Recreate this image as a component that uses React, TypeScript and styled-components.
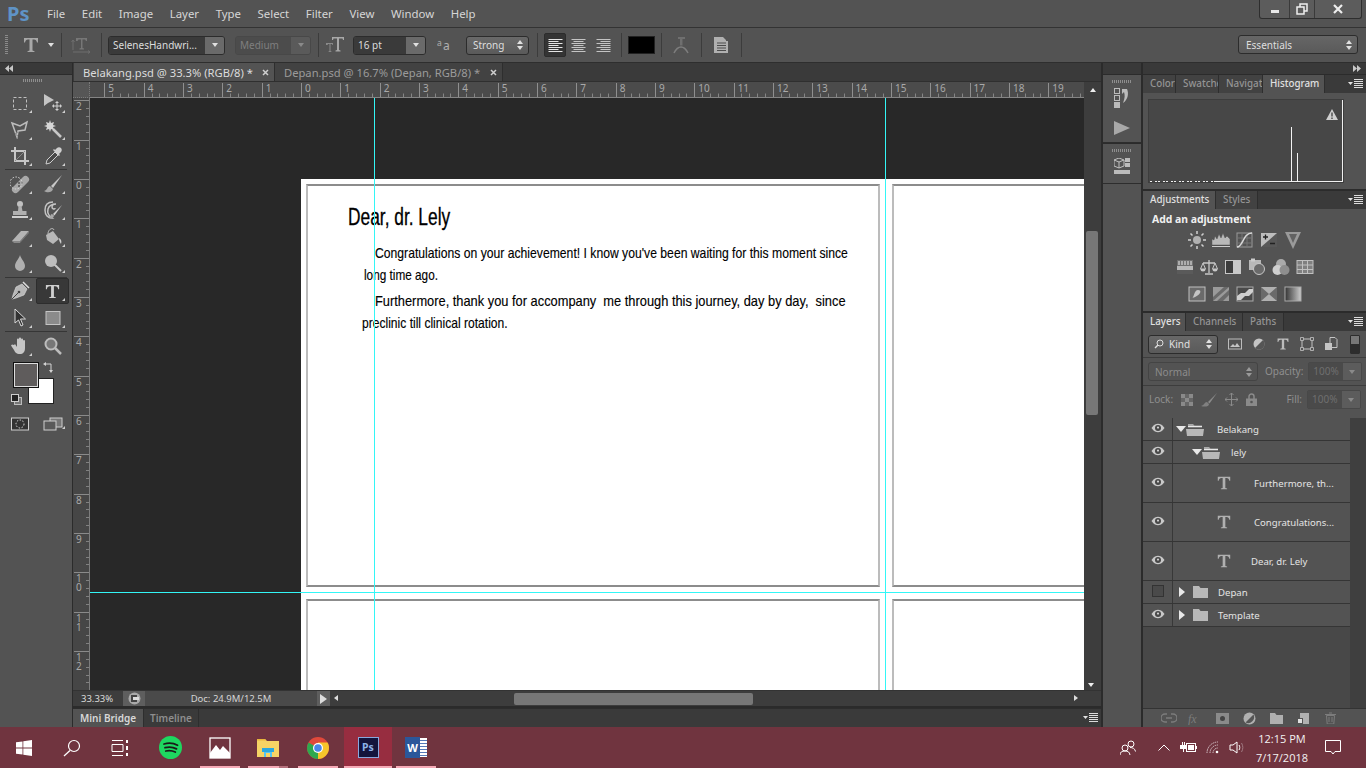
import React from 'react';
import styled, { createGlobalStyle } from 'styled-components';

const Global = createGlobalStyle`
  html, body { margin: 0; padding: 0; background: #2f2f2f; overflow: hidden; }
  * { box-sizing: border-box; }
  #root { width: 1366px; height: 768px; }
`;

const UI = `"Noto Sans", "DejaVu Sans", sans-serif`;

const Root = styled.div`
  width: 1366px; height: 768px; display: flex; flex-direction: column; overflow: hidden;
  background: #2b2b2b; font-family: ${UI}; font-size: 11px; color: #d8d8d8;
`;

/* ---------- Menu bar ---------- */
const MenuBar = styled.div`
  height: 28px; flex: none; display: flex; align-items: center; background: #535353; position: relative;
  border-bottom: 1px solid #333;
`;
const Logo = styled.div`
  width: 47px; padding-left: 7px; font-size: 20px; font-weight: 700; color: #5f93c6; line-height: 28px;
`;
const MenuItems = styled.div`display: flex; gap: 16.6px; font-size: 11.4px; color: #d6d6d6;`;
const WinControls = styled.div`
  position: absolute; right: 4px; top: 0; height: 19px; display: flex; border: 1px solid #2e2e2e; border-top: 0;
  border-radius: 0 0 3px 3px; background: #5c5c5c;
`;
const WinBtn = styled.div<{ $w: number }>`
  width: ${p => p.$w}px; display: flex; align-items: center; justify-content: center; border-right: 1px solid #3a3a3a;
  &:last-child { border-right: 0; }
`;

/* ---------- Options bar ---------- */
const OptionsBar = styled.div`
  height: 35px; flex: none; display: flex; align-items: center; background: #535353; border-bottom: 1px solid #2e2e2e; position: relative;
`;
const Grip = styled.div`width: 3px; height: 20px; margin-left: 5px; background: repeating-linear-gradient(#8a8a8a 0 1px, transparent 1px 2px);`;
const OptSep = styled.div<{ $l: number }>`width: 1px; height: 24px; background: #3c3c3c; margin-left: ${p => p.$l}px; flex: none;`;
const OptCell = styled.div<{ $l: number; $w: number }>`
  margin-left: ${p => p.$l}px; width: ${p => p.$w}px; height: 24px; display: flex; align-items: center; justify-content: center; flex: none;
`;
const Field = styled.div<{ $l: number; $w: number; $dim?: boolean }>`
  margin-left: ${p => p.$l}px; width: ${p => p.$w}px; height: 19px; flex: none; display: flex; border-radius: 3px; overflow: hidden;
  border: 1px solid ${p => (p.$dim ? '#484848' : '#2c2c2c')};
`;
const FieldText = styled.div<{ $dim?: boolean }>`
  flex: 1; min-width: 0; background: ${p => (p.$dim ? '#4c4c4c' : '#3a3a3a')}; color: ${p => (p.$dim ? '#7f7f7f' : '#dcdcdc')};
  font-size: 10px; line-height: 17px; padding-left: 4px; white-space: nowrap;
`;
const FieldBtn = styled.div<{ $dim?: boolean }>`
  width: 19px; flex: none; background: ${p => (p.$dim ? '#5a5a5a' : '#6a6a6a')}; display: flex; align-items: center; justify-content: center;
`;
const Caret = styled.div<{ $c?: string }>`
  width: 0; height: 0; border-left: 3.5px solid transparent; border-right: 3.5px solid transparent; border-top: 4px solid ${p => p.$c || '#e0e0e0'};
`;
const Stepper = styled.div<{ $c?: string }>`
  display: flex; flex-direction: column; gap: 2px;
  &::before, &::after { content: ''; width: 0; height: 0; border-left: 3px solid transparent; border-right: 3px solid transparent; }
  &::before { border-bottom: 4px solid ${p => p.$c || '#e0e0e0'}; }
  &::after { border-top: 4px solid ${p => p.$c || '#e0e0e0'}; }
`;
const SelectBox = styled.div<{ $l?: number; $w: number; $dim?: boolean; $pad?: number }>`
  margin-left: ${p => p.$l || 0}px; width: ${p => p.$w}px; height: 19px; flex: none; border-radius: 3px;
  border: 1px solid ${p => (p.$dim ? '#444' : '#2c2c2c')}; background: ${p => (p.$dim ? '#535353' : 'linear-gradient(#696969,#5a5a5a)')};
  color: ${p => (p.$dim ? '#8c8c8c' : '#dedede')}; display: flex; align-items: center; justify-content: space-between;
  padding: 0 5px 0 ${p => p.$pad ?? 6}px; font-size: 10px;
`;
const AlignBtn = styled.div<{ $l: number; $on?: boolean }>`
  margin-left: ${p => p.$l}px; width: 22px; height: 24px; flex: none; display: flex; align-items: center; justify-content: center; border-radius: 2px;
  background: ${p => (p.$on ? '#343434' : 'transparent')}; border: 1px solid ${p => (p.$on ? '#2c2c2c' : 'transparent')};
`;
const Swatch = styled.div`margin-left: 6px; width: 27px; height: 18px; background: #000; border: 1px solid #222; flex: none;`;
const Essentials = styled(SelectBox)`position: absolute; left: 1238px; top: 7px; background: linear-gradient(#666,#5a5a5a);`;

/* ---------- Workspace ---------- */
const Workspace = styled.div`flex: 1; display: flex; min-height: 0; background: #2b2b2b;`;
const CollapseStrip = styled.div`
  height: 11px; background: #393939; display: flex; align-items: center; padding: 0 5px; justify-content: space-between; flex: none;
`;
const LeftColumn = styled.div`width: 72px; flex: none; display: flex; flex-direction: column; margin-right: 1px;`;
const ToolPanel = styled.div`flex: 1; background: #535353; margin-top: 1px; padding: 4px 0 0 3px; display: flex; flex-direction: column; align-items: flex-start;`;
const PanelGrip = styled.div<{ $w?: number }>`
  width: ${p => p.$w || 20}px; height: 3px; margin: 0 auto; flex: none; background: repeating-linear-gradient(90deg,#8e8e8e 0 1px,transparent 1px 2px);
`;
const ToolGrip = styled(PanelGrip)`margin: 0 0 8px 20px;`;
const ToolGrid = styled.div`display: grid; grid-template-columns: 33px 33px; grid-auto-rows: 26.3px;`;
const ToolBtn = styled.div<{ $on?: boolean; $noCorner?: boolean }>`
  position: relative; display: flex; align-items: center; justify-content: center; border-radius: 2px;
  background: ${p => (p.$on ? '#383838' : 'transparent')}; border: 1px solid ${p => (p.$on ? '#2d2d2d' : 'transparent')};
  &::after {
    content: ''; position: absolute; right: 3px; bottom: 2px; width: 0; height: 0; display: ${p => (p.$noCorner ? 'none' : 'block')};
    border-left: 3px solid transparent; border-bottom: 3px solid #cfcfcf;
  }
`;
const ToolSep = styled.div`width: 62px; height: 1px; background: #363636; margin: 0.5px 0 0.5px 2px;`;
const ColorWell = styled.div`position: relative; width: 66px; height: 50px; flex: none;`;
const BgSwatch = styled.div`position: absolute; left: 25px; top: 19px; width: 26px; height: 26px; background: #fff; border: 1px solid #222;`;
const FgSwatch = styled.div`position: absolute; left: 10px; top: 3px; width: 26px; height: 26px; background: #5f5c5c; border: 1px solid #111; outline: 1px solid #ddd; outline-offset: -2px;`;
const SwapIcon = styled.div`position: absolute; left: 40px; top: 2px;`;
const DefaultIcon = styled.div`position: absolute; left: 8px; top: 34px;`;
const ModeRow = styled.div`display: flex; margin-top: 7px; width: 66px;`;
const ModeBtn = styled(ToolBtn)`width: 33px; height: 16px;`;

const DocColumn = styled.div`width: 1028px; flex: none; display: flex; flex-direction: column; margin-right: 2px;`;
const TabBar = styled.div`height: 19px; flex: none; background: #3a3a3a; display: flex; padding-left: 1px; border-bottom: 1px solid #2f2f2f;`;
const DocTab = styled.div<{ $on?: boolean; $w: number }>`
  width: ${p => p.$w}px; display: flex; align-items: center; justify-content: space-between; padding: 0 5px 0 9px; font-size: 11.2px;
  background: ${p => (p.$on ? '#535353' : '#424242')}; color: ${p => (p.$on ? '#dcdcdc' : '#9b9b9b')}; white-space: nowrap;
  border-right: 1px solid #2e2e2e;
`;
const RulerTop = styled.div`height: 16px; flex: none; display: flex; background: #4b4b4b;`;
const RulerCorner = styled.div`
  width: 17px; background: #565656; border-right: 1px dotted #7a7a7a; border-bottom: 1px dotted #7a7a7a;
`;
const ScrollEnd = styled.div`width: 17px; flex: none; background: #3d3d3d; display: flex; align-items: center; justify-content: center;`;
const MainRow = styled.div`flex: 1; display: flex; min-height: 0;`;
const RulerLeft = styled.div`width: 17px; flex: none; background: #464646;`;
const Canvas = styled.div`flex: 1; position: relative; overflow: hidden; background: #282828;`;
const VScroll = styled.div`width: 17px; flex: none; background: #3d3d3d; display: flex; flex-direction: column; align-items: center; position: relative;`;
const VThumb = styled.div`position: absolute; left: 2px; top: 133px; width: 12px; height: 184px; background: #777; border-radius: 2px;`;
const DownMark = styled.div`position: absolute; bottom: 3px; left: 4px;`;
const Page = styled.div`
  position: absolute; left: 211px; top: 81px; width: 1200px; height: 840px; background: #fff; padding: 5px;
  display: grid; grid-template-columns: 574px 574px; grid-template-rows: 403px 403px; gap: 12px;
`;
const Card = styled.div`
  border: 2px solid #bcbcbc; border-top-color: #8c8c8c; border-bottom-color: #8c8c8c; padding: 19px 0 0 40px; color: #000;
  font-family: "Liberation Sans", sans-serif;
`;
const Title = styled.div`
  font-size: 23px; line-height: 24px; white-space: nowrap; height: 37px; -webkit-text-stroke: 0.3px #000;
  transform: scaleX(0.754); transform-origin: left center;
`;
const Letter = styled.div<{ $ind: number; $sx: number; $h?: number }>`
  font-size: 15px; height: ${p => p.$h || 22}px; line-height: 22px; white-space: pre; margin-left: ${p => p.$ind}px;
  transform: scaleX(${p => p.$sx}); transform-origin: left center; -webkit-text-stroke: 0.15px #000;
`;
const GuideV = styled.div<{ $x: number }>`position: absolute; top: 0; bottom: 0; left: ${p => p.$x}px; width: 1px; background: #33f6f6;`;
const GuideH = styled.div<{ $y: number }>`position: absolute; left: 0; right: 0; top: ${p => p.$y}px; height: 1px; background: #33f6f6;`;

const StatusRow = styled.div`height: 16px; flex: none; display: flex; align-items: center; background: #3d3d3d; border-top: 1px solid #333;`;
const Zoom = styled.div`width: 50px; padding-left: 8px; font-size: 9.5px; color: #dcdcdc;`;
const StatusIcon = styled.div`width: 22px; height: 15px; background: #5e5e5e; display: flex; align-items: center; justify-content: center;`;
const DocInfo = styled.div`width: 172px; height: 15px; background: #4a4a4a; font-size: 9.5px; color: #d4d4d4; text-align: center; line-height: 15px;`;
const PlayBtn = styled.div`width: 13px; height: 15px; background: #5e5e5e; display: flex; align-items: center; justify-content: center;`;
const HScroll = styled.div`flex: 1; height: 15px; position: relative; background: #3d3d3d;`;
const HThumb = styled.div`position: absolute; left: 184px; top: 2px; width: 239px; height: 12px; background: #777; border-radius: 2px;`;
const Arrow = styled.div<{ $dir: 'l' | 'r' | 'u' | 'd'; $c?: string }>`
  width: 0; height: 0; border: 3px solid transparent;
  ${p => p.$dir === 'l' && `border-right: 4px solid ${p.$c || '#ddd'}; border-left: 0;`}
  ${p => p.$dir === 'r' && `border-left: 4px solid ${p.$c || '#ddd'}; border-right: 0;`}
  ${p => p.$dir === 'u' && `border-bottom: 4px solid ${p.$c || '#eee'}; border-top: 0;`}
  ${p => p.$dir === 'd' && `border-top: 4px solid ${p.$c || '#eee'}; border-bottom: 0;`}
`;
const PlayArrow = styled(Arrow)`border-width: 5px 0 5px 7px;`;
const HArrowL = styled.div`position: absolute; left: 4px; top: 4px;`;
const HArrowR = styled.div`position: absolute; right: 6px; top: 4px;`;
const StatusEnd = styled(ScrollEnd)`height: 15px;`;
const BridgeRow = styled.div`
  height: 19px; flex: none; margin-top: 2px; display: flex; background: #3a3a3a; position: relative; border-top: 1px solid #2d2d2d;
`;
const BottomTab = styled.div<{ $on?: boolean; $w: number }>`
  width: ${p => p.$w}px; font-size: 10px; font-weight: 600; text-align: center; line-height: 18px;
  background: ${p => (p.$on ? '#535353' : 'transparent')}; color: ${p => (p.$on ? '#d8d8d8' : '#8e8e8e')}; border-right: 1px solid #2e2e2e;
`;
const MenuIconSpot = styled.div`position: absolute; right: 3px; top: 4px;`;

/* ---------- Dock ---------- */
const Dock = styled.div`width: 38px; flex: none; display: flex; flex-direction: column; margin-right: 2px;`;
const DockStrip = styled.div`height: 11px; background: #393939; flex: none;`;
const DockGroup = styled.div<{ $h: number }>`
  height: ${p => p.$h}px; flex: none; background: #535353; margin-top: 1px; border-bottom: 1px solid #2d2d2d; padding-top: 5px;
  display: flex; flex-direction: column; align-items: center; gap: 5px;
`;
const DockRest = styled.div`flex: 1; background: #535353; margin-top: 0;`;
const PlayIcon = styled.svg`display: block; margin-top: 8px;`;
const PluginIcon = styled.svg`display: block; margin-top: 1px;`;

/* ---------- Panels ---------- */
const PanelsCol = styled.div`width: 223px; flex: none; display: flex; flex-direction: column; gap: 2px;`;
const PanelsStrip = styled(CollapseStrip)`justify-content: flex-end; margin-bottom: -1px;`;
const Panel = styled.div<{ $h?: number; $grow?: boolean }>`
  background: #535353; display: flex; flex-direction: column; ${p => (p.$h ? `height:${p.$h}px;` : '')} flex: ${p => (p.$grow ? 1 : 'none')}; min-height: 0;
`;
const TabRow = styled.div`height: 18px; flex: none; background: #3a3a3a; display: flex; position: relative;`;
const PanelTab = styled.div<{ $on?: boolean; $w: number }>`
  width: ${p => p.$w}px; overflow: hidden; white-space: nowrap; font-size: 9.8px; font-weight: 500; line-height: 18px; padding-left: 7px;
  background: ${p => (p.$on ? '#535353' : '#424242')}; color: ${p => (p.$on ? '#e0e0e0' : '#949494')}; border-right: 1px solid #2e2e2e;
`;
const Histogram = styled.div`
  margin: 6px 0 0 5px; width: 196px; height: 84px; background: #474747; border: 1px solid #3d3d3d; position: relative;
`;
const HistIcon = styled.div`position: absolute; inset: 0;`;
const AddTitle = styled.div`font-size: 10.4px; font-weight: 700; color: #f0f0f0; margin: 2px 0 0 9px; line-height: 16px;`;
const AdjRow = styled.div<{ $l: number }>`display: flex; gap: 6px; margin: 2px 0 0 ${p => p.$l}px; height: 22px; align-items: center;`;
const AdjRow2 = styled(AdjRow)`margin-top: 5px;`;
const FilterRow = styled.div`height: 27px; flex: none; display: flex; align-items: center; padding-left: 5px; border-bottom: 1px solid #3d3d3d; position: relative;`;
const KindSelect = styled.div`
  width: 70px; height: 19px; border: 1px solid #2c2c2c; border-radius: 3px; background: linear-gradient(#676767,#5a5a5a);
  display: flex; align-items: center; gap: 5px; padding: 0 5px; font-size: 10px; color: #e0e0e0;
`;
const Spacer = styled.div`flex: 1;`;
const FilterIcons = styled.div`display: flex; gap: 10px; margin-left: 10px; align-items: center;`;
const MiniSwitch = styled.div`width: 10px; height: 19px; margin-left: 12px; background: linear-gradient(#777 50%, #2d2d2d 50%); border: 1px solid #2d2d2d; border-radius: 1px;`;
const BlendRow = styled.div`height: 28px; flex: none; display: flex; align-items: center; padding-left: 5px; border-bottom: 1px solid #3d3d3d;`;
const LockRow = styled(BlendRow)`border-bottom: 0; height: 32px; padding-bottom: 5px;`;
const DimLabel = styled.div<{ $l?: number }>`font-size: 10px; color: #8f8f8f; margin-left: ${p => p.$l || 0}px; margin-top: -2px;`;
const PctField = styled.div<{ $r?: number }>`
  width: 54px; height: 19px; margin-left: 5px; margin-right: ${p => p.$r || 0}px; display: flex; border-radius: 2px; overflow: hidden; border: 1px solid #484848; flex: none;
  font-size: 10px; color: #6f6f6f;
`;
const PctText = styled.div`flex: 1; background: #4a4a4a; line-height: 17px; padding-left: 4px;`;
const PctBtn = styled.div`width: 18px; background: #5c5c5c; display: flex; align-items: center; justify-content: center;`;
const LockIcons = styled.div`display: flex; gap: 8px; margin-left: 8px; align-items: center;`;
const LayersWrap = styled.div`flex: 1; display: flex; min-height: 0;`;
const LayerList = styled.div`width: 207px; flex: none; display: flex; flex-direction: column;`;
const LayerTrack = styled.div`flex: 1; background: #3f3f3f;`;
const LayerRow = styled.div<{ $h: number }>`
  height: ${p => p.$h}px; flex: none; display: flex; align-items: stretch; background: #535353; border-bottom: 1px solid #353535;
`;
const EyeCell = styled.div`width: 30px; flex: none; display: flex; align-items: center; justify-content: center; border-right: 1px solid #383838; padding-bottom: 2px;`;
const LayerBody = styled.div<{ $l: number }>`flex: 1; display: flex; align-items: center; padding-left: ${p => p.$l}px;`;
const LayerName = styled.div<{ $l: number }>`margin-left: ${p => p.$l}px; font-size: 9.6px; color: #e4e4e4; white-space: nowrap;`;
const EmptyBox = styled.div`width: 12px; height: 12px; border: 1px solid #333; background: #4a4a4a;`;
const TwistyGap = styled.span`width: 8px; flex: none;`;
const Twisty = styled.div<{ $open?: boolean }>`
  width: 0; height: 0; flex: none; border-style: solid;
  ${p => (p.$open
    ? 'border-width: 6px 5px 0 5px; border-color: #e8e8e8 transparent transparent transparent;'
    : 'border-width: 5px 0 5px 6px; border-color: transparent transparent transparent #e8e8e8;')}
`;
const PanelEmpty = styled.div`flex: 1; background: #484848; min-height: 0;`;
const PanelFooter = styled.div`
  height: 19px; flex: none; background: #535353; border-top: 1px solid #333; display: flex; align-items: center; padding-left: 12px;
`;
const FooterCell = styled.div`width: 27px; flex: none; display: flex; align-items: center; justify-content: center;`;

/* ---------- Taskbar ---------- */
const Taskbar = styled.div`height: 41px; flex: none; background: #70343f; display: flex; align-items: center; position: relative; color: #fff;`;
const TaskBtn = styled.div<{ $w: number; $on?: boolean; $inset?: number; $split?: boolean }>`
  width: ${p => p.$w}px; height: 41px; flex: none; display: flex; align-items: center; justify-content: center; position: relative;
  background: ${p => (p.$on ? '#972d40' : 'transparent')};
  &::after {
    content: ''; display: ${p => (p.$inset !== undefined ? 'block' : 'none')}; position: absolute; bottom: 0; left: ${p => p.$inset}px; right: ${p => p.$inset}px; height: 2px;
    background: ${p => (p.$split ? 'linear-gradient(90deg,#f5a9b6 78%,#b5717d 78%)' : '#f5a9b6')};
  }
`;
const PsTile = styled.div`
  width: 21px; height: 21px; background: #14143c; border: 1px solid #88a8de; color: #8fb2ea; font-size: 10.5px; font-weight: 700; line-height: 19px; text-align: center;
`;
const WordTile = styled.div`position: relative; width: 22px; height: 21px; display: flex; align-items: center;`;
const WordDoc = styled.div`
  position: absolute; right: 0; top: 1px; width: 16px; height: 19px; background: repeating-linear-gradient(#fff 0 1.5px,#5479b8 1.5px 3px);
`;
const WordW = styled.div`
  position: absolute; left: 0; top: 0; width: 15px; height: 21px; background: #2b579a; color: #fff; font-size: 11px; font-weight: 700; line-height: 21px; text-align: center;
`;
const TrayRight = styled.div`margin-left: auto; display: flex; align-items: center; height: 41px;`;
const TrayCell = styled.div<{ $w: number; $l?: number; $r?: number }>`
  width: ${p => p.$w}px; margin-left: ${p => p.$l || 0}px; margin-right: ${p => p.$r || 0}px; flex: none; display: flex; align-items: center; justify-content: center;
`;
const Clock = styled.div`
  width: 66px; margin-left: 1px; flex: none; text-align: center; font-family: "Open Sans", sans-serif; font-size: 11px; line-height: 19px; color: #f2f2f2; white-space: nowrap;
`;

/* ---------- Icons ---------- */
const G = '#b5b5b5';
const Svg = ({ s = 20, h, children }: { s?: number; h?: number; children: React.ReactNode }) => (
  <svg width={s} height={h ?? s} viewBox={`0 0 ${s} ${h ?? s}`} style={{ display: 'block' }}>{children}</svg>
);
const TypeT = ({ c = G, s = 18 }: { c?: string; s?: number }) => (
  <svg width={s} height={s} viewBox="0 0 18 18" style={{ display: 'block' }}>
    <path d="M2 2h14v4.500h-1C14.600 4.500 13.600 3.500 12 3.500h-1.500v11l2 .7V16h-7v-.8l2-.7v-11H6C4.400 3.500 3.400 4.500 3 6.500H2z" fill={c} />
  </svg>
);
const Lines = ({ mode = 'l' }: { mode?: 'l' | 'c' | 'r' }) => {
  const rows = [14, 10, 14, 10, 14, 10, 14];
  return (
    <Svg s={15} h={15}>
      {rows.map((w, i) => {
        const x = mode === 'l' ? 0.5 : mode === 'r' ? 14.5 - w : (15 - w) / 2;
        return <rect key={i} x={x} y={1 + i * 2} width={w} height={1} fill={mode === 'l' ? '#e4e4e4' : '#c4c4c4'} />;
      })}
    </Svg>
  );
};
const DArrows = ({ dir = 'l' }: { dir?: 'l' | 'r' }) => (
  <svg width="8" height="7" viewBox="0 0 8 7" style={{ display: 'block' }}>
    <path d={dir === 'l' ? 'M4 0v7L0 3.500zM8 0v7L4 3.500z' : 'M0 0v7l4-3.500zM4 0v7l4-3.500z'} fill="#c8c8c8" />
  </svg>
);
const PanelMenu = () => (
  <svg width="15" height="9" viewBox="0 0 15 9" style={{ display: 'block' }}>
    <path d="M0 3h5L2.500 6z" fill="#e2e2e2" />
    <path d="M6 .5h9M6 2.500h9M6 4.500h9M6 6.500h9M6 8.500h9" stroke="#dcdcdc" strokeWidth="1" />
  </svg>
);
const Close = ({ c = '#cfcfcf' }: { c?: string }) => (
  <svg width="7" height="7" viewBox="0 0 7 7"><path d="M1 1l5 5M6 1L1 6" stroke={c} strokeWidth="1.500" /></svg>
);
const Eye = () => (
  <svg width="14" height="10" viewBox="0 0 14 10" style={{ display: 'block' }}>
    <path d="M.5 5C3 1.500 5 .8 7 .8S11 1.500 13.500 5C11 8.500 9 9.200 7 9.200S3 8.500.5 5z" fill="#c9c9c9" />
    <circle cx="7" cy="5" r="3" fill="#484848" /><circle cx="7" cy="4.600" r="1.100" fill="#cfcfcf" />
  </svg>
);
const FolderOpen = () => (
  <svg width="18" height="13" viewBox="0 0 18 13" style={{ display: 'block' }}>
    <path d="M2 1h5l1.500 1.500H16v2H2z" fill="#a8a8a8" /><path d="M2 3.500h14" stroke="#e8e8e8" />
    <path d="M0 6h18l-1 7H1z" fill="#b8b8b8" />
  </svg>
);
const FolderClosed = () => (
  <svg width="15" height="12" viewBox="0 0 15 12" style={{ display: 'block' }}>
    <path d="M0 0h6l1.500 2H15v10H0z" fill="#b8b8b8" />
  </svg>
);

const Tools: Record<string, React.ReactNode> = {
  marquee: <Svg><rect x="3.500" y="4.500" width="13" height="12" fill="none" stroke="#c0c0c0" strokeDasharray="3 2" /></Svg>,
  move: <Svg s={22}><path d="M2 2l10 6-4 2-2 1-4 3z" fill="#c4c4c4" /><path d="M15 9v10M10 14h10M13.500 10.500h3M13.500 17.500h3M11.500 12.500v3M18.500 12.500v3" stroke="#d0d0d0" /></Svg>,
  lasso: <Svg><path d="M2 4l8 3 7-4-2 8-7 1-1 6z" fill="none" stroke="#bcbcbc" strokeWidth="1.500" /><path d="M8 13l-3 2 3 2" fill="none" stroke="#888" /></Svg>,
  wand: <Svg><path d="M10 10l8 8" stroke="#c8c8c8" strokeWidth="2.500" /><path d="M7 1l1 3 3-1-1 3 3 1-3 1 1 3-3-1-1 3-1-3-3 1 1-3-3-1 3-1-1-3 3 1z" fill="#d6d6d6" /></Svg>,
  crop: <Svg><path d="M5 1v14h14M1 5h14v14" fill="none" stroke="#c6c6c6" strokeWidth="2" /><path d="M5 15L15 5" stroke="#8a8a8a" /></Svg>,
  dropper: <Svg><path d="M3 18l1-4 8-8 3 3-8 8z" fill="#4a4a4a" stroke="#cfcfcf" /><path d="M12 4l2-2c1-1 3-1 4 0s1 3 0 4l-2 2 1 1-1 1-6-6 1-1z" fill="#cfcfcf" /></Svg>,
  heal: <Svg><path d="M3 13L13 3a3.500 3.500 0 015 5L8 18a3.500 3.500 0 01-5-5z" fill="#a8a8a8" /><circle cx="9" cy="9" r="1" fill="#555" /><circle cx="12" cy="9" r="1" fill="#555" /><circle cx="9" cy="12" r="1" fill="#555" /><circle cx="6" cy="9" r="6" fill="none" stroke="#ddd" strokeDasharray="1.500 1.500" /></Svg>,
  brush: <Svg><path d="M19 1L8 12l2 2z" fill="#c8c8c8" /><path d="M7 12c-3 0-2 4-6 5 3 2 8 2 9-2z" fill="#a6a6a6" /></Svg>,
  stamp: <Svg><circle cx="10" cy="4" r="3" fill="#c0c0c0" /><path d="M8.500 6h3l1 5h4v4H3v-4h5z" fill="#b0b0b0" /><rect x="2" y="16" width="16" height="2" fill="#d0d0d0" /></Svg>,
  history: <Svg><path d="M10 2c-5 0-8 3-8 8s3 8 7 8c-3-2-5-5-4-9 1-3 4-5 8-5-2 0-4 1-4 3s3 3 3 1" fill="none" stroke="#c4c4c4" strokeWidth="1.500" /><path d="M19 5L10 14l1.500 1.500z" fill="#d0d0d0" /><path d="M9 14c-2 0-1 3-3 4 2 1 5 0 5-2.500z" fill="#a8a8a8" /></Svg>,
  eraser: <Svg><path d="M2 14L11 4h8l-9 11H4z" fill="#b4b4b4" /><path d="M2 14h8v2H4z" fill="#888" /><path d="M10 14l9-10v2l-9 10z" fill="#777" /></Svg>,
  bucket: <Svg><path d="M3 8l7-4 6 8-6 5-6-4z" fill="#b8b8b8" /><path d="M5 7c0-5 5-7 6-4" fill="none" stroke="#c4c4c4" /><path d="M16 11c2 1 3 3 2 6-1-2-2-3-2-6z" fill="#d0d0d0" /></Svg>,
  blur: <Svg><path d="M10 2c1 4 5 7 5 11a5 5 0 01-10 0c0-4 4-7 5-11z" fill="#b0b0b0" /></Svg>,
  dodge: <Svg><circle cx="8" cy="8" r="6" fill="#bdbdbd" /><path d="M12 12l6 6" stroke="#c8c8c8" strokeWidth="2" /></Svg>,
  pen: <Svg><path d="M12 3l5 5-3 6-8 3-4 1 1-4 3-8z" fill="#b8b8b8" stroke="#e0e0e0" strokeWidth=".6" /><path d="M2 18l6-6" stroke="#444" /><path d="M13 1l6 6" stroke="#ddd" strokeWidth="1.500" /><circle cx="9" cy="11" r="1.300" fill="#444" /></Svg>,
  select: <Svg><path d="M5 1v14l3.500-3 2.500 6 2-1-2.500-6h5z" fill="#333" stroke="#d8d8d8" /></Svg>,
  rect: <Svg><rect x="3" y="3.500" width="14" height="13" fill="#8b8b8b" stroke="#c4c4c4" /></Svg>,
  hand: <Svg><path d="M4 9l1-1 2 3V3.500a1 1 0 012 0V2.500a1 1 0 012 0v1a1 1 0 012 0V5a1 1 0 012 0v7c0 4-2 6-5 6-4 0-5-2-6-4L1 9.500l1-1z" fill="#c6c6c6" /></Svg>,
  zoom: <Svg><circle cx="8" cy="8" r="5.500" fill="#777" stroke="#bcbcbc" strokeWidth="2" /><path d="M12 12l6 6" stroke="#bcbcbc" strokeWidth="2.500" /></Svg>,
  quickmask: <Svg s={20} h={14}><rect x="1.500" y="1" width="17" height="12" fill="#333" stroke="#cfcfcf" /><circle cx="10" cy="7" r="4" fill="none" stroke="#e0e0e0" strokeDasharray="1.500 1.500" /></Svg>,
  screen: <Svg s={20} h={14}><rect x="7" y="1" width="12" height="9" fill="#777" stroke="#cfcfcf" /><rect x="1" y="4" width="12" height="9" fill="#5a5a5a" stroke="#cfcfcf" /></Svg>,
};

const Adj: Record<string, React.ReactNode> = {
  sun: <Svg s={18}><circle cx="9" cy="9" r="4" fill="#b0b0b0" /><path d="M9 0v3M9 15v3M0 9h3M15 9h3M2.500 2.500l2 2M13.500 13.500l2 2M15.500 2.500l-2 2M4.500 13.500l-2 2" stroke="#d0d0d0" strokeWidth="1.500" /></Svg>,
  levels: <Svg s={18}><path d="M0 14V8l2 1 1-4 2 3 2-5 2 4 2-5 2 5 2-2 3 3v6z" fill="#b8b8b8" stroke="#444" strokeWidth=".4" /><path d="M0 15.500h18" stroke="#ccc" /></Svg>,
  curves: <Svg s={18}><rect x="1" y="2" width="15" height="14" fill="none" stroke="#9a9a9a" /><path d="M6 2v14M11 2v14M1 7h15M1 12h15" stroke="#777" /><path d="M1 16c6 0 6-14 15-14" fill="none" stroke="#d8d8d8" strokeWidth="1.500" /></Svg>,
  expo: <Svg s={18}><rect x="1" y="2" width="16" height="14" fill="#bdbdbd" /><path d="M17 2L1 16h16z" fill="#585858" /><path d="M3 6h5M5.500 3.500v5M10 12.500h5" stroke="#222" strokeWidth="1.300" /></Svg>,
  tri: <Svg s={18}><path d="M1 1h16l-8 17z" fill="#9a9a9a" /><path d="M5 3h8l-4 9z" fill="#626262" /></Svg>,
  hsl: <Svg s={18}><rect x="1" y="2" width="16" height="14" fill="#b8b8b8" /><path d="M1 2h16v6H1z" fill="#707070" /><path d="M3 3v4M6 3v4M9 3v4M12 3v4M15 3v4" stroke="#cfcfcf" strokeWidth="1.300" /><path d="M1 12h16v4H1z" fill="#5a5a5a" /></Svg>,
  scale: <Svg s={18}><path d="M9 2v13M3 5h12M5 16h8" stroke="#c8c8c8" strokeWidth="1.300" /><path d="M3 5L.5 11h5zM15 5l-2.500 6h5z" fill="none" stroke="#c8c8c8" /><path d="M.5 11a2.500 2.500 0 005 0zM12.500 11a2.500 2.500 0 005 0z" fill="#c8c8c8" /></Svg>,
  bw: <Svg s={18}><rect x="1" y="2" width="16" height="14" fill="#c8c8c8" /><rect x="2" y="3" width="7" height="12" fill="#3c3c3c" /></Svg>,
  photo: <Svg s={18}><rect x="1" y="2" width="12" height="10" fill="#b8b8b8" /><rect x="3" y="0.500" width="4" height="3" fill="#ccc" /><circle cx="11" cy="11" r="5.500" fill="#6a6a6a" stroke="#c8c8c8" /></Svg>,
  mixer: <Svg s={18}><circle cx="9" cy="6" r="5" fill="#aaa" /><circle cx="5.500" cy="12" r="5" fill="#cfcfcf" /><circle cx="12.500" cy="12" r="5" fill="#8e8e8e" /></Svg>,
  grid: <Svg s={18}><rect x="1" y="2.500" width="16" height="13" fill="#808080" stroke="#c0c0c0" /><path d="M6.500 2.500v13M11.500 2.500v13M1 7h16M1 11.500h16" stroke="#c0c0c0" /></Svg>,
  invert: <Svg s={18}><rect x="1" y="2" width="16" height="14" fill="#6a6a6a" stroke="#c0c0c0" /><path d="M4 13c2 0 2-8 6-8 2 0 3 1 2 3s-6 5-8 5z" fill="#c4c4c4" /></Svg>,
  poster: <Svg s={18}><rect x="1" y="2" width="16" height="14" fill="#9a9a9a" /><path d="M1 12L12 2h5L1 16z" fill="#6a6a6a" /><path d="M5 16L17 5v5l-6 6z" fill="#6a6a6a" /></Svg>,
  thresh: <Svg s={18}><rect x="1" y="2" width="16" height="14" fill="#4a4a4a" stroke="#aaa" /><path d="M1 11l4-3h4l4-4h4v3l-4 4H9l-4 4H1z" fill="#d0d0d0" /></Svg>,
  select: <Svg s={18}><rect x="1" y="2" width="16" height="14" fill="#b0b0b0" /><path d="M1 2l8 7-8 7zM17 2L9 9l8 7z" fill="#6a6a6a" /></Svg>,
  grad: <svg width="18" height="18" viewBox="0 0 18 18" style={{ display: 'block' }}><defs><linearGradient id="gr"><stop offset="0" stopColor="#333" /><stop offset="1" stopColor="#ccc" /></linearGradient></defs><rect x="1" y="2" width="16" height="14" fill="url(#gr)" stroke="#aaa" /></svg>,
};

/* ---------- Rulers ---------- */
const UNIT = 39.33;
const RULER_FONT = 'Noto Sans, sans-serif';
const RulerH = () => {
  const items: React.ReactNode[] = [];
  for (let n = -5; n <= 19; n++) {
    const x = 211 + n * UNIT;
    items.push(<path key={`m${n}`} d={`M${Math.round(x) + 0.5} 1V15`} stroke="#8f8f8f" />);
    items.push(<text key={`t${n}`} x={x + 4} y={10} fontSize="10" fill="#a9a9a9" fontFamily={RULER_FONT}>{Math.abs(n)}</text>);
    for (let k = 1; k < 5; k++) {
      const mx = Math.round(x + (k * UNIT) / 5) + 0.5;
      items.push(<path key={`k${n}-${k}`} d={`M${mx} 11.500V15`} stroke="#858585" />);
    }
  }
  return (
    <svg width="994" height="16" style={{ display: 'block', flex: 'none' }}>
      {items}
      <path d="M0 15.500H994" stroke="#848484" />
    </svg>
  );
};
const RulerV = () => {
  const items: React.ReactNode[] = [];
  for (let n = -2; n <= 13; n++) {
    const y = 81 + n * UNIT;
    items.push(<path key={`m${n}`} d={`M1 ${Math.round(y) + 0.5}H17`} stroke="#8a8a8a" />);
    const label = String(Math.abs(n));
    if (label.length === 1) {
      items.push(<text key={`t${n}`} x={3} y={y + 10} fontSize="10" fill="#a9a9a9" fontFamily={RULER_FONT}>{label}</text>);
    } else {
      items.push(<text key={`a${n}`} x={3} y={y + 10} fontSize="10" fill="#a9a9a9" fontFamily={RULER_FONT}>{label[0]}</text>);
      items.push(<text key={`b${n}`} x={3} y={y + 19} fontSize="10" fill="#a9a9a9" fontFamily={RULER_FONT}>{label[1]}</text>);
    }
    for (let k = 1; k < 5; k++) {
      const my = Math.round(y + (k * UNIT) / 5) + 0.5;
      items.push(<path key={`k${n}-${k}`} d={`M13 ${my}H17`} stroke="#808080" />);
    }
  }
  return (
    <svg width="17" height="592" style={{ display: 'block' }}>
      {items}
      <path d="M16.500 0V592" stroke="#7c7c7c" />
    </svg>
  );
};

/* ---------- Data ---------- */
const menus = ['File', 'Edit', 'Image', 'Layer', 'Type', 'Select', 'Filter', 'View', 'Window', 'Help'];
const toolGroups: { k: string; on?: boolean; nc?: boolean }[][] = [
  [{ k: 'marquee' }, { k: 'move' }, { k: 'lasso' }, { k: 'wand' }, { k: 'crop' }, { k: 'dropper' }],
  [{ k: 'heal' }, { k: 'brush' }, { k: 'stamp' }, { k: 'history' }, { k: 'eraser' }, { k: 'bucket' }, { k: 'blur' }, { k: 'dodge' }],
  [{ k: 'pen' }, { k: 'type', on: true }, { k: 'select' }, { k: 'rect' }],
  [{ k: 'hand' }, { k: 'zoom', nc: true }],
];

const FilterPhoto = () => <Svg s={14}><rect x=".5" y="2" width="13" height="10" fill="none" stroke="#bcbcbc" /><path d="M2 10l3-3 2 2 2-3 3 4z" fill="#c4c4c4" /></Svg>;
const FilterAdj = () => <Svg s={14}><circle cx="7" cy="7" r="5.500" fill="#c4c4c4" /><path d="M11 3a5.500 5.500 0 01-8 8z" fill="#555" /></Svg>;
const FilterShape = () => <Svg s={14}><rect x="2" y="2" width="10" height="10" fill="none" stroke="#c4c4c4" /><path d="M.5.5h3v3h-3zM10.500.5h3v3h-3zM.5 10.500h3v3h-3zM10.500 10.500h3v3h-3z" fill="#555" stroke="#c4c4c4" strokeWidth=".8" /></Svg>;
const FilterSmart = () => <Svg s={14}><path d="M6 .5h5l2 2v8H6z" fill="none" stroke="#c4c4c4" /><rect x="1" y="6" width="7" height="7" fill="#c4c4c4" /></Svg>;

const App: React.FC = () => (
  <Root>
    <Global />
    <MenuBar>
      <Logo>Ps</Logo>
      <MenuItems>{menus.map(m => <span key={m}>{m}</span>)}</MenuItems>
      <WinControls>
        <WinBtn $w={30}><Svg s={10}><rect x="1" y="6" width="8" height="3" fill="#e8e8e8" /></Svg></WinBtn>
        <WinBtn $w={25}><Svg s={12}><rect x="4" y="1" width="7" height="7" fill="none" stroke="#eee" strokeWidth="1.500" /><rect x="1" y="4" width="7" height="7" fill="#5c5c5c" stroke="#eee" strokeWidth="1.500" /></Svg></WinBtn>
        <WinBtn $w={46}><svg width="10" height="10" viewBox="0 0 10 10"><path d="M1 1l8 8M9 1l-8 8" stroke="#eee" strokeWidth="2.200" /></svg></WinBtn>
      </WinControls>
    </MenuBar>

    <OptionsBar>
      <Grip />
      <OptCell $l={13} $w={20}><TypeT c="#a8a8a8" /></OptCell>
      <OptCell $l={5} $w={10}><Caret /></OptCell>
      <OptSep $l={5} />
      <OptCell $l={9} $w={20}><Svg s={20}><path d="M5 3h11v3h-1l-1-1.500h-2.500V13l1.500.5v1H8.500v-1l1.500-.5V4.500H7.500L6.500 6h-1.500z" fill="#777" /><path d="M2 5v10M0.500 7L2 5l1.500 2M2 17h17M17 15.500l2 1.500-2 1.500" fill="none" stroke="#6e6e6e" /></Svg></OptCell>
      <OptSep $l={10} />
      <Field $l={6} $w={117}>
        <FieldText>SelenesHandwri...</FieldText>
        <FieldBtn><Caret /></FieldBtn>
      </Field>
      <Field $l={10} $w={76} $dim>
        <FieldText $dim>Medium</FieldText>
        <FieldBtn $dim><Caret $c="#8a8a8a" /></FieldBtn>
      </Field>
      <OptSep $l={7} />
      <OptCell $l={6} $w={20}><svg width="20" height="18" viewBox="0 0 20 18" style={{ display: 'block' }}><path d="M7 1h12v3h-1l-.5-1.500H14V14l1.500.5v1h-5v-1L12 14V2.500H8.500L8 4H7z" fill="#a8a8a8" /><path d="M1 7h7v2H7.500L7 8H5.500v7l1 .5v.5h-3v-.5l1-.5V8H3l-.5 1H1z" fill="#8a8a8a" /></svg></OptCell>
      <Field $l={8} $w={73}>
        <FieldText>16 pt</FieldText>
        <FieldBtn><Caret /></FieldBtn>
      </Field>
      <OptCell $l={9} $w={20}><svg width="16" height="12" viewBox="0 0 16 12" style={{ display: 'block' }}><text x="0" y="7" fontSize="8.500" fill="#b0b0b0" fontFamily="Noto Sans">a</text><text x="6" y="11" fontSize="12" fill="#b0b0b0" fontFamily="Noto Sans">a</text></svg></OptCell>
      <SelectBox $l={11} $w={63}>Strong<Stepper /></SelectBox>
      <OptSep $l={8} />
      <AlignBtn $l={6} $on><Lines /></AlignBtn>
      <AlignBtn $l={1}><Lines mode="c" /></AlignBtn>
      <AlignBtn $l={3}><Lines mode="r" /></AlignBtn>
      <OptSep $l={7} />
      <Swatch />
      <OptSep $l={6} />
      <OptCell $l={9} $w={20}><svg width="18" height="20" viewBox="0 0 18 20" style={{ display: 'block' }}><path d="M6 2h7v2h-2.500v6.500H8V4H6z" fill="#6f6f6f" /><path d="M2 18c2-4 4-6 7-6s5 2 7 6" fill="none" stroke="#7d7d7d" strokeWidth="1.500" /></svg></OptCell>
      <OptSep $l={10} />
      <OptCell $l={9} $w={20}><Svg s={18}><path d="M2 1h9l3 3v1h2v12H2z" fill="#b0b0b0" /><path d="M5 7h9M5 9.500h9M5 12h9M5 14.500h9" stroke="#4c4c4c" /></Svg></OptCell>
      <OptSep $l={10} />
      <Essentials $w={120} $pad={7}>Essentials<Stepper /></Essentials>
    </OptionsBar>

    <Workspace>
      <LeftColumn>
        <CollapseStrip><DArrows /></CollapseStrip>
        <ToolPanel>
          <ToolGrip />
          {toolGroups.map((g, gi) => (
            <React.Fragment key={gi}>
              {gi > 0 && <ToolSep />}
              <ToolGrid>
                {g.map(t => (
                  <ToolBtn key={t.k} $on={t.on} $noCorner={t.nc}>
                    {t.k === 'type' ? <TypeT c="#cfcfcf" s={17} /> : Tools[t.k]}
                  </ToolBtn>
                ))}
              </ToolGrid>
            </React.Fragment>
          ))}
          <ColorWell>
            <BgSwatch />
            <FgSwatch />
            <SwapIcon><svg width="11" height="11" viewBox="0 0 11 11"><path d="M2 2h6v6" fill="none" stroke="#d4d4d4" /><path d="M0 2l3-2v4zM8 11L6 8h4z" fill="#d4d4d4" /></svg></SwapIcon>
            <DefaultIcon><svg width="11" height="11" viewBox="0 0 11 11"><rect x="3.500" y="3.500" width="7" height="7" fill="#777" stroke="#bbb" /><rect x=".5" y=".5" width="7" height="7" fill="#222" stroke="#ccc" /></svg></DefaultIcon>
          </ColorWell>
          <ModeRow>
            <ModeBtn $noCorner>{Tools.quickmask}</ModeBtn>
            <ModeBtn>{Tools.screen}</ModeBtn>
          </ModeRow>
        </ToolPanel>
      </LeftColumn>

      <DocColumn>
        <TabBar>
          <DocTab $on $w={201}>Belakang.psd @ 33.3% (RGB/8) * <Close /></DocTab>
          <DocTab $w={228}>Depan.psd @ 16.7% (Depan, RGB/8) * <Close /></DocTab>
        </TabBar>
        <RulerTop>
          <RulerCorner />
          <RulerH />
          <ScrollEnd><Arrow $dir="u" /></ScrollEnd>
        </RulerTop>
        <MainRow>
          <RulerLeft><RulerV /></RulerLeft>
          <Canvas>
            <Page>
              <Card>
                <Title>Dear, dr. Lely</Title>
                <Letter $ind={27} $sx={0.812}>Congratulations on your achievement! I know you've been waiting for this moment since</Letter>
                <Letter $ind={16} $sx={0.785} $h={26}>long time ago.</Letter>
                <Letter $ind={27} $sx={0.856}>Furthermore, thank you for accompany  me through this journey, day by day,  since</Letter>
                <Letter $ind={14} $sx={0.805}>preclinic till clinical rotation.</Letter>
              </Card>
              <Card />
              <Card />
              <Card />
            </Page>
            <GuideV $x={284} />
            <GuideV $x={795} />
            <GuideH $y={494} />
          </Canvas>
          <VScroll>
            <VThumb />
            <DownMark><Arrow $dir="d" /></DownMark>
          </VScroll>
        </MainRow>
        <StatusRow>
          <Zoom>33.33%</Zoom>
          <StatusIcon>
            <svg width="13" height="13" viewBox="0 0 13 13"><circle cx="6.500" cy="6.500" r="6" fill="#aaa" /><rect x="3" y="3" width="6" height="7" fill="#444" /><path d="M5 5h6v3H5z" fill="#ddd" /></svg>
          </StatusIcon>
          <DocInfo>Doc: 24.9M/12.5M</DocInfo>
          <PlayBtn><PlayArrow $dir="r" /></PlayBtn>
          <HScroll>
            <HArrowL><Arrow $dir="l" /></HArrowL>
            <HThumb />
            <HArrowR><Arrow $dir="r" /></HArrowR>
          </HScroll>
          <StatusEnd />
        </StatusRow>
        <BridgeRow>
          <BottomTab $on $w={71}>Mini Bridge</BottomTab>
          <BottomTab $w={55}>Timeline</BottomTab>
          <MenuIconSpot><PanelMenu /></MenuIconSpot>
        </BridgeRow>
      </DocColumn>

      <Dock>
        <DockStrip />
        <DockGroup $h={68}>
          <PanelGrip />
          <svg width="16" height="20" viewBox="0 0 16 20" style={{ display: 'block' }}>
            <rect x=".5" y=".5" width="5" height="5" fill="none" stroke="#bbb" /><rect x=".5" y="7.500" width="5" height="5" fill="none" stroke="#bbb" /><rect x="0" y="14" width="6" height="6" fill="#bbb" />
            <path d="M8 1h5c2 4 1 11-4 14 2-5 2-8 1-11l-2 2z" fill="#bbb" />
          </svg>
          <PlayIcon width="16" height="14" viewBox="0 0 16 14"><path d="M0 0l16 7-16 7z" fill="#a8a8a8" /></PlayIcon>
        </DockGroup>
        <DockGroup $h={40}>
          <PanelGrip />
          <PluginIcon width="16" height="17" viewBox="0 0 16 17">
            <path d="M5 0l5 2v6l-5 2-5-2V2z" fill="none" stroke="#c0c0c0" /><path d="M0 2l5 2 5-2M5 4v6" stroke="#c0c0c0" fill="none" />
            <rect x="11" y="0" width="5" height="4" fill="#bbb" /><rect x="11" y="5" width="5" height="4" fill="#bbb" /><rect x="0" y="12" width="16" height="4" fill="#bbb" />
          </PluginIcon>
        </DockGroup>
        <DockRest />
      </Dock>

      <PanelsCol>
        <PanelsStrip><DArrows dir="r" /></PanelsStrip>
        <Panel $h={114}>
          <TabRow>
            <PanelTab $w={33}>Color</PanelTab>
            <PanelTab $w={43}>Swatches</PanelTab>
            <PanelTab $w={44}>Navigator</PanelTab>
            <PanelTab $on $w={62}>Histogram</PanelTab>
            <MenuIconSpot><PanelMenu /></MenuIconSpot>
          </TabRow>
          <Histogram>
            <HistIcon>
              <svg width="194" height="82" viewBox="0 0 194 82" style={{ display: 'block' }}>
                <path d="M193.500 0V82" stroke="#f0f0f0" />
                <path d="M0 81.500H194" stroke="#f0f0f0" />
                <path d="M0 81.500h66" stroke="#474747" strokeDasharray="1 2 3 2" />
                <path d="M142.500 27V82M148.500 53V82" stroke="#f4f4f4" />
                <path d="M183 9L177 20H189z" fill="#cfcfcf" />
                <path d="M183 12.500v4M183 17.500v1.500" stroke="#333" strokeWidth="1.200" />
              </svg>
            </HistIcon>
          </Histogram>
        </Panel>
        <Panel $h={120}>
          <TabRow>
            <PanelTab $on $w={73}>Adjustments</PanelTab>
            <PanelTab $w={42}>Styles</PanelTab>
            <MenuIconSpot><PanelMenu /></MenuIconSpot>
          </TabRow>
          <AddTitle>Add an adjustment</AddTitle>
          <AdjRow $l={45}>{['sun', 'levels', 'curves', 'expo', 'tri'].map(k => <React.Fragment key={k}>{Adj[k]}</React.Fragment>)}</AdjRow>
          <AdjRow2 $l={33}>{['hsl', 'scale', 'bw', 'photo', 'mixer', 'grid'].map(k => <React.Fragment key={k}>{Adj[k]}</React.Fragment>)}</AdjRow2>
          <AdjRow2 $l={45}>{['invert', 'poster', 'thresh', 'select', 'grad'].map(k => <React.Fragment key={k}>{Adj[k]}</React.Fragment>)}</AdjRow2>
        </Panel>
        <Panel $grow>
          <TabRow>
            <PanelTab $on $w={43}>Layers</PanelTab>
            <PanelTab $w={57}>Channels</PanelTab>
            <PanelTab $w={41}>Paths</PanelTab>
            <MenuIconSpot><PanelMenu /></MenuIconSpot>
          </TabRow>
          <FilterRow>
            <KindSelect>
              <svg width="10" height="10" viewBox="0 0 10 10"><circle cx="6" cy="4" r="3" fill="none" stroke="#ddd" /><path d="M4 6L1 9" stroke="#ddd" strokeWidth="1.500" /></svg>
              Kind<Spacer /><Stepper />
            </KindSelect>
            <FilterIcons>
              <FilterPhoto /><FilterAdj /><TypeT c="#bcbcbc" s={14} /><FilterShape /><FilterSmart />
            </FilterIcons>
            <MiniSwitch />
          </FilterRow>
          <BlendRow>
            <SelectBox $w={110} $dim $pad={6}>Normal<Stepper $c="#9a9a9a" /></SelectBox>
            <DimLabel $l={7}>Opacity:</DimLabel>
            <PctField><PctText>100%</PctText><PctBtn><Caret $c="#8a8a8a" /></PctBtn></PctField>
          </BlendRow>
          <LockRow>
            <DimLabel $l={1}>Lock:</DimLabel>
            <LockIcons>
              <svg width="12" height="12" viewBox="0 0 12 12"><rect width="12" height="12" fill="#666" /><path d="M0 0h4v4H0zM8 0h4v4H8zM4 4h4v4H4zM0 8h4v4H0zM8 8h4v4H8z" fill="#8a8a8a" /></svg>
              <svg width="16" height="14" viewBox="0 0 16 14"><path d="M16 0L7 9l1.500 1.500z" fill="#8a8a8a" /><path d="M6 9c-3 0-2 3-6 4 3 1 8 1 8-2z" fill="#808080" /></svg>
              <svg width="13" height="13" viewBox="0 0 13 13"><path d="M6.500 0v13M0 6.500h13M4.500 2l2-2 2 2M4.500 11l2 2 2-2M2 4.500l-2 2 2 2M11 4.500l2 2-2 2" fill="none" stroke="#8a8a8a" /></svg>
              <svg width="11" height="13" viewBox="0 0 11 13"><path d="M3 6V3.500a2.500 2.500 0 015 0V6" fill="none" stroke="#8a8a8a" strokeWidth="1.500" /><rect y="5.500" width="11" height="7.500" fill="#8a8a8a" /><circle cx="5.500" cy="9" r="1.300" fill="#555" /></svg>
            </LockIcons>
            <Spacer />
            <DimLabel>Fill:</DimLabel>
            <PctField $r={5}><PctText>100%</PctText><PctBtn><Caret $c="#8a8a8a" /></PctBtn></PctField>
          </LockRow>
          <LayersWrap>
            <LayerList>
              <LayerRow $h={23}><EyeCell><Eye /></EyeCell><LayerBody $l={3}><Twisty $open /><FolderOpen /><LayerName $l={13}>Belakang</LayerName></LayerBody></LayerRow>
              <LayerRow $h={23}><EyeCell><Eye /></EyeCell><LayerBody $l={19}><Twisty $open /><FolderOpen /><LayerName $l={11}>lely</LayerName></LayerBody></LayerRow>
              <LayerRow $h={39}><EyeCell><Eye /></EyeCell><LayerBody $l={43}><TypeT c="#b0b0b0" s={16} /><LayerName $l={22}>Furthermore, th...</LayerName></LayerBody></LayerRow>
              <LayerRow $h={39}><EyeCell><Eye /></EyeCell><LayerBody $l={43}><TypeT c="#b0b0b0" s={16} /><LayerName $l={22}>Congratulations...</LayerName></LayerBody></LayerRow>
              <LayerRow $h={39}><EyeCell><Eye /></EyeCell><LayerBody $l={43}><TypeT c="#b0b0b0" s={16} /><LayerName $l={19}>Dear, dr. Lely</LayerName></LayerBody></LayerRow>
              <LayerRow $h={23}><EyeCell><EmptyBox /></EyeCell><LayerBody $l={6}><Twisty /><TwistyGap /><FolderClosed /><LayerName $l={10}>Depan</LayerName></LayerBody></LayerRow>
              <LayerRow $h={23}><EyeCell><Eye /></EyeCell><LayerBody $l={6}><Twisty /><TwistyGap /><FolderClosed /><LayerName $l={10}>Template</LayerName></LayerBody></LayerRow>
              <PanelEmpty />
            </LayerList>
            <LayerTrack />
          </LayersWrap>
          <PanelFooter>
            <FooterCell><svg width="16" height="10" viewBox="0 0 16 10"><path d="M6 1H4a4 4 0 000 8h2M10 1h2a4 4 0 010 8h-2M5 5h6" fill="none" stroke="#7c7c7c" strokeWidth="1.500" /></svg></FooterCell>
            <FooterCell><svg width="15" height="13" viewBox="0 0 15 13"><text x="0" y="11" fontSize="12" fontStyle="italic" fontFamily="Liberation Serif" fill="#7c7c7c">fx</text></svg></FooterCell>
            <FooterCell><svg width="13" height="11" viewBox="0 0 13 11"><rect width="13" height="11" fill="#8a8a8a" /><circle cx="6.500" cy="5.500" r="2.500" fill="#444" /></svg></FooterCell>
            <FooterCell><svg width="13" height="13" viewBox="0 0 13 13"><circle cx="6.500" cy="6.500" r="6" fill="#b0b0b0" /><path d="M10.500 2.500a6 6 0 01-8 8z" fill="#555" /></svg></FooterCell>
            <FooterCell><svg width="13" height="11" viewBox="0 0 13 11"><path d="M0 0h5l1.500 2H13v9H0z" fill="#b0b0b0" /></svg></FooterCell>
            <FooterCell><svg width="11" height="11" viewBox="0 0 11 11"><path d="M2 0h9v11H5V5H2z" fill="#b0b0b0" /><rect x="0" y="6" width="4" height="4" fill="#e0e0e0" /></svg></FooterCell>
            <FooterCell><svg width="11" height="12" viewBox="0 0 11 12"><path d="M4 1h3M0 2.500h11M1.500 3.500l.7 8.500h6.600l.7-8.500zM4 5v5M7 5v5" fill="none" stroke="#7c7c7c" /></svg></FooterCell>
          </PanelFooter>
        </Panel>
      </PanelsCol>
    </Workspace>

    <Taskbar>
      <TaskBtn $w={48}><svg width="16" height="16" viewBox="0 0 16 16"><path d="M0 2.300l6.500-.9v6.200H0zM7.300 1.300L16 0v7.600H7.300zM0 8.400h6.500v6.200L0 13.700zM7.300 8.400H16V16l-8.700-1.200z" fill="#fff" /></svg></TaskBtn>
      <TaskBtn $w={48}><svg width="18" height="18" viewBox="0 0 18 18"><circle cx="11" cy="7" r="5.500" fill="none" stroke="#fff" strokeWidth="1.200" /><path d="M7 11.500L1 17" stroke="#fff" strokeWidth="1.300" /></svg></TaskBtn>
      <TaskBtn $w={48}><svg width="18" height="16" viewBox="0 0 18 16"><path d="M1 .5h11M1 15.500h11M1 4.500h11v7H1z" fill="none" stroke="#fff" /><rect x="15" y="0" width="2" height="3" fill="#fff" /><rect x="15" y="6" width="2" height="4" fill="#fff" /><rect x="15" y="13" width="2" height="3" fill="#fff" /></svg></TaskBtn>
      <TaskBtn $w={52}>
        <svg width="23" height="23" viewBox="0 0 23 23"><circle cx="11.500" cy="11.500" r="11.500" fill="#1ed760" /><path d="M5 8c4.500-1.300 9.500-1 13.500 1.300M6 11.700c4-1 8-.7 11.500 1.200M6.800 15c3.200-.8 6.500-.5 9.500 1" fill="none" stroke="#1a1a1a" strokeWidth="1.800" strokeLinecap="round" /></svg>
      </TaskBtn>
      <TaskBtn $w={48} $inset={4}>
        <svg width="22" height="22" viewBox="0 0 22 22"><rect x="1" y="1" width="20" height="20" fill="#70343f" stroke="#fff" strokeWidth="1.300" /><path d="M1 21v-5l6-8 4 5 3-4 7 7v5z" fill="#fff" /></svg>
      </TaskBtn>
      <TaskBtn $w={48} $inset={4} $split>
        <svg width="22" height="19" viewBox="0 0 22 19"><path d="M0 1h8l2 2h12v16H0z" fill="#f6d365" /><path d="M0 1h8l1 1.500H0z" fill="#e8b63c" /><rect x="5" y="10" width="12" height="4" fill="#2aa7e0" /><path d="M7 14h8v5H7z" fill="#57c4f0" /><rect x="9" y="15" width="4" height="4" fill="#f6d365" /></svg>
      </TaskBtn>
      <TaskBtn $w={52} $inset={6}>
        <svg width="22" height="22" viewBox="0 0 22 22">
          <circle cx="11" cy="11" r="11" fill="#e0493b" />
          <path d="M11 11L1.500 5.500A11 11 0 000 11c0 6 5 11 11 11z" fill="#2ea84f" />
          <path d="M11 11v11c6 0 11-5 11-11 0-2-.5-4-1.500-5.500H11z" fill="#f7c52b" />
          <circle cx="11" cy="11" r="5" fill="#fff" /><circle cx="11" cy="11" r="3.800" fill="#4a86e8" />
        </svg>
      </TaskBtn>
      <TaskBtn $w={48} $on $inset={0}><PsTile>Ps</PsTile></TaskBtn>
      <TaskBtn $w={48} $inset={4}>
        <WordTile><WordDoc /><WordW>W</WordW></WordTile>
      </TaskBtn>
      <TrayRight>
        <TrayCell $w={24}><svg width="16" height="16" viewBox="0 0 16 16"><circle cx="11" cy="4" r="3" fill="none" stroke="#fff" /><circle cx="5" cy="8" r="3" fill="none" stroke="#fff" /><path d="M0 15c0-3 2-4 5-4s4.500 1 5 4M10 7.500c2.500 0 5 1 5.500 4" fill="none" stroke="#fff" /></svg></TrayCell>
        <TrayCell $w={24} $l={12}><svg width="12" height="7" viewBox="0 0 12 7"><path d="M.5 6.500L6 1l5.500 5.500" fill="none" stroke="#fff" /></svg></TrayCell>
        <TrayCell $w={24}><svg width="17" height="11" viewBox="0 0 17 11"><path d="M0 3h2V0h1v3h1V0h1v3h1v4H4v3H3V7H0z" fill="#fff" /><rect x="6.500" y="1.500" width="9" height="8" fill="none" stroke="#fff" /><rect x="8" y="3" width="6" height="5" fill="#fff" /><rect x="16" y="4" width="1" height="3" fill="#fff" /></svg></TrayCell>
        <TrayCell $w={26}><svg width="14" height="13" viewBox="0 0 14 13"><path d="M1 12A11 11 0 0112 1M4 12a8 8 0 018-8M7 12a5 5 0 015-5" fill="none" stroke="#d9c8cc" strokeWidth="1" strokeDasharray="1.500 .8" /><circle cx="11" cy="11" r="1.300" fill="#fff" /></svg></TrayCell>
        <TrayCell $w={22}><svg width="16" height="13" viewBox="0 0 16 13"><path d="M1 4h3l4-3v11L4 9H1z" fill="none" stroke="#fff" /><path d="M10 4c1 1.500 1 3.500 0 5" fill="none" stroke="#fff" /><path d="M12.500 2c1.800 3 1.800 6 0 9" fill="none" stroke="#a07a82" /></svg></TrayCell>
        <Clock>12:15 PM<br />7/17/2018</Clock>
        <TrayCell $w={30} $l={3} $r={18}><svg width="16" height="15" viewBox="0 0 16 15"><path d="M.5.5h15v11H10l-2 2.500-2-2.500H.5z" fill="none" stroke="#fff" /></svg></TrayCell>
      </TrayRight>
    </Taskbar>
  </Root>
);

export default App;
